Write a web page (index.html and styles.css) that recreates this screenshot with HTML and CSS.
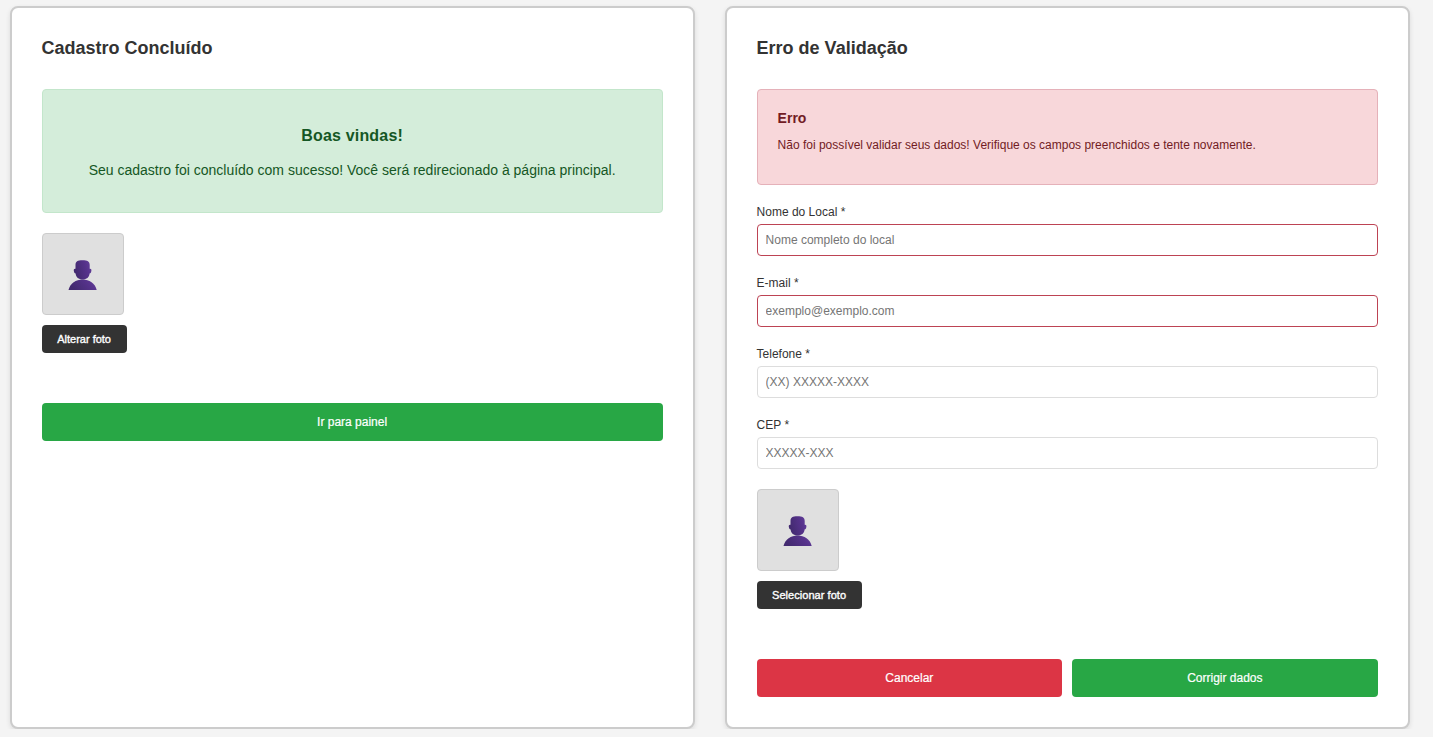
FILE: index.html
```html
<!DOCTYPE html>
<html lang="pt-BR">
<head>
<meta charset="utf-8">
<title>Cadastro</title>
<link rel="stylesheet" href="styles.css">
</head>
<body>
<svg class="defs" aria-hidden="true">
  <defs>
    <linearGradient id="bust" x1="0" x2="1" y1="0.3" y2="0"><stop offset="0" stop-color="#432a70"/><stop offset="0.6" stop-color="#55328a"/><stop offset="1" stop-color="#64409c"/></linearGradient>
    <symbol id="person" viewBox="0 0 30 32">
      <path fill="url(#bust)" d="M.5 32C2 25 8 21.400 14.600 21.400S27.200 25 28.700 32Z"/>
      <path fill="url(#bust)" d="M7.500 7C7.500 3.500 9.500 2.200 14.500 2.200S21.700 3.500 21.700 7V10.800C23.400 10.600 23.700 11.800 23.300 13.300C23 14.800 22.400 15.400 21.600 15.500C21.400 19.200 18.500 21.500 14.600 21.500S7.900 19.200 7.600 15.500C6.800 15.400 6.200 14.800 5.900 13.300C5.500 11.800 5.800 10.600 7.500 10.800Z"/>
    </symbol>
  </defs>
</svg>
<main class="screens">
  <section class="card">
    <h2 class="card-title">Cadastro Concluído</h2>
    <div class="alert success">
      <h3 class="success-title">Boas vindas!</h3>
      <p class="success-text">Seu cadastro foi concluído com sucesso! Você será redirecionado à página principal.</p>
    </div>
    <div class="photo"><svg class="person"><use href="#person"/></svg></div>
    <button class="photo-button">Alterar foto</button>
    <div class="actions"><button class="button confirm">Ir para painel</button></div>
  </section>
  <section class="card">
    <h2 class="card-title">Erro de Validação</h2>
    <div class="alert error">
      <h3 class="error-title">Erro</h3>
      <p class="error-text">Não foi possível validar seus dados! Verifique os campos preenchidos e tente novamente.</p>
    </div>
    <div class="field"><label class="label" for="nome">Nome do Local *</label><input class="input invalid" id="nome" placeholder="Nome completo do local"></div>
    <div class="field"><label class="label" for="email">E-mail *</label><input class="input invalid" id="email" placeholder="exemplo@exemplo.com"></div>
    <div class="field"><label class="label" for="tel">Telefone *</label><input class="input" id="tel" placeholder="(XX) XXXXX-XXXX"></div>
    <div class="field"><label class="label" for="cep">CEP *</label><input class="input" id="cep" placeholder="XXXXX-XXX"></div>
    <div class="photo"><svg class="person"><use href="#person"/></svg></div>
    <button class="photo-button select">Selecionar foto</button>
    <div class="actions"><button class="button cancel">Cancelar</button><button class="button confirm">Corrigir dados</button></div>
  </section>
</main>
</body>
</html>
```
FILE: styles.css
```css
* { box-sizing: border-box; margin: 0; padding: 0; }
body { background: #f4f4f4; color: #333; font-family: "Liberation Sans", Arial, sans-serif; overflow: hidden; }
.defs { display: block; width: 0; height: 0; }
.screens { display: grid; grid-template-columns: 685px 685px; gap: 30px; padding: 6px 0 0 9.6px; }
.card { height: 723px; padding: 28px 30px; background: #fff; border: 2px solid #ccc; border-radius: 8px; box-shadow: 0 2px 5px rgba(0,0,0,.1); }
.card-title { height: 24px; font-size: 18px; line-height: 24px; margin-bottom: 29px; }
.alert { border: 1px solid; border-radius: 4px; margin-bottom: 20px; }
.success { height: 124px; padding-top: 36px; text-align: center; color: #155724; background: #d4edda; border-color: #c3e6cb; }
.success-title { font-size: 16px; line-height: 20px; letter-spacing: .18px; }
.success-text { font-size: 14px; line-height: 20px; margin-top: 14px; }
.error { height: 96px; padding: 20px; color: #721c24; background: #f8d7da; border-color: #e5b1b9; }
.error-title { font-size: 14px; line-height: 17px; }
.error-text { font-size: 12px; line-height: 18px; margin-top: 9px; }
.field { height: 71px; }
.label { display: block; font-size: 12px; line-height: 14px; height: 19px; }
.input { display: block; width: 100%; height: 32px; padding: 0 8px; border: 1px solid #ddd; border-radius: 4px; font: 12px "Liberation Sans", Arial, sans-serif; }
.input::placeholder { color: #757575; }
.invalid { border-color: #bd4354; }
.photo { display: flex; align-items: center; justify-content: center; width: 82px; height: 82px; background: #e0e0e0; border: 1px solid #ccc; border-radius: 4px; margin-bottom: 10px; }
.person { width: 30px; height: 32px; }
.photo-button { display: block; width: 85px; height: 28px; color: #fff; background: #333; border: 0; border-radius: 4px; font: 11px "Liberation Sans", Arial, sans-serif; -webkit-text-stroke: .35px #fff; }
.select { width: 105px; letter-spacing: .05px; }
.actions { display: flex; gap: 10px; margin-top: 50px; }
.button { flex: 1 1 0; height: 38px; color: #fff; border: 0; border-radius: 4px; font: 12px "Liberation Sans", Arial, sans-serif; -webkit-text-stroke: .2px #fff; }
.confirm { background: #28a745; }
.cancel { background: #dc3545; }
```
